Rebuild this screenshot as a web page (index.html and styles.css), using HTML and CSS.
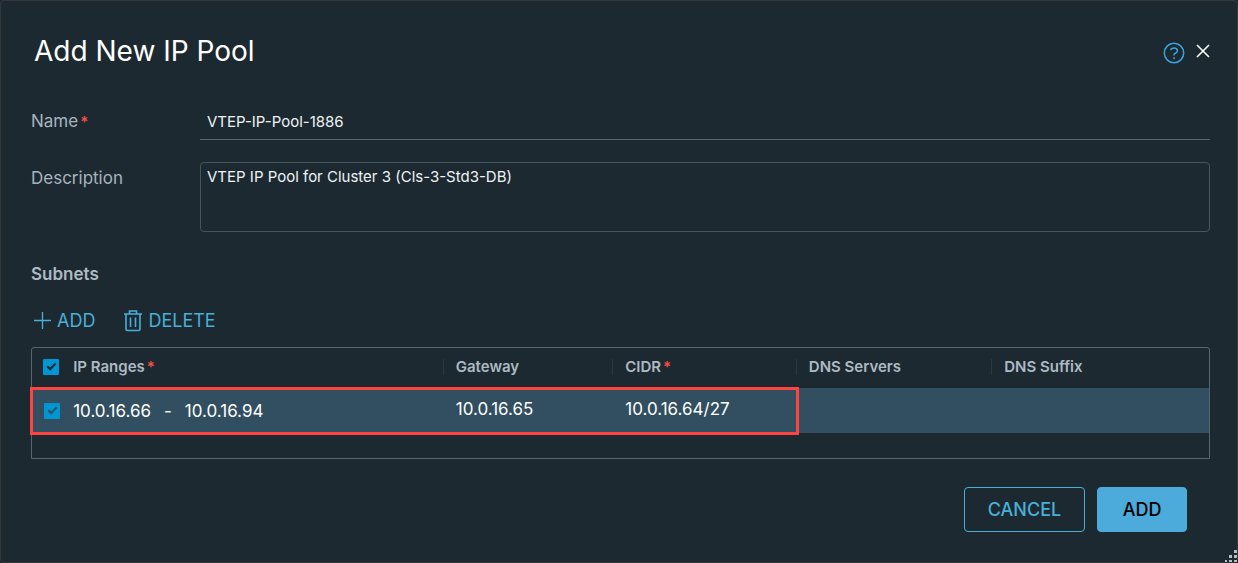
FILE: index.html
```html
<!DOCTYPE html>
<html lang="en">
<head>
<meta charset="utf-8">
<meta name="viewport" content="width=device-width, initial-scale=1">
<title>Add New IP Pool</title>
<link rel="stylesheet" href="styles.css">
</head>
<body>
<main class="dialog" role="dialog" aria-labelledby="dialog-title">
  <header class="dialog-header">
    <h1 class="dialog-title" id="dialog-title">Add New IP Pool</h1>
    <div class="header-actions">
      <button class="icon-button help-button" type="button" aria-label="Help">
        <svg class="help-icon" viewBox="0 0 22 22"><circle cx="11" cy="11" r="9.7"/><path d="M7.6 8.1C8 6.8 9.3 6 11 6c2 0 3.4 1.100 3.400 2.700 0 1.700-1.300 2.300-2.400 2.800-.7.300-1 .7-1 1.300v.6"/><circle class="dot" cx="11" cy="16.200" r="1"/></svg>
      </button>
      <button class="icon-button" type="button" aria-label="Close">
        <svg class="close-icon" viewBox="0 0 14 14"><path d="M1 1l12 12M13 1L1 13"/></svg>
      </button>
    </div>
  </header>

  <form class="dialog-form">
    <div class="field">
      <label class="field-label" for="name">Name<span class="required">*</span></label>
      <input class="text-input" id="name" type="text" value="VTEP-IP-Pool-1886">
    </div>
    <div class="field field-description">
      <label class="field-label" for="description">Description</label>
      <textarea class="text-area" id="description">VTEP IP Pool for Cluster 3 (Cls-3-Std3-DB)</textarea>
    </div>

    <h2 class="section-title">Subnets</h2>
    <div class="toolbar">
      <button class="tool-button" type="button">
        <svg class="plus-icon" viewBox="0 0 18 18"><path d="M8.500 0v17M0 8.500h17"/></svg>ADD
      </button>
      <button class="tool-button" type="button">
        <svg class="trash-icon" viewBox="0 0 20 22"><path d="M1 4h18M6.500 3.500V1h7v2.500M3 4.500V19q0 1.500 1.500 1.500h11q1.500 0 1.500-1.500V4.500M7.500 7.500v9.500M12.500 7.500v9.500"/></svg>DELETE
      </button>
    </div>

    <div class="grid">
      <table class="subnets">
        <colgroup><col class="col-check"><col class="col-ranges"><col class="col-gateway"><col class="col-cidr"><col class="col-servers"><col class="col-suffix"></colgroup>
        <thead>
          <tr>
            <th><input class="checkbox" type="checkbox" aria-label="Select all subnets" checked></th>
            <th>IP Ranges<span class="required">*</span></th>
            <th><span class="divided">Gateway</span></th>
            <th><span class="divided">CIDR<span class="required">*</span></span></th>
            <th><span class="divided">DNS Servers</span></th>
            <th><span class="divided">DNS Suffix</span></th>
          </tr>
        </thead>
        <tbody>
          <tr>
            <td><input class="checkbox checkbox-row" type="checkbox" aria-label="Select subnet 10.0.16.64/27" checked></td>
            <td><span class="range"><span>10.0.16.66</span><span>-</span><span>10.0.16.94</span></span></td>
            <td class="value">10.0.16.65</td>
            <td class="value">10.0.16.64/27</td>
            <td></td>
            <td></td>
          </tr>
        </tbody>
      </table>
      <div class="highlight"></div>
    </div>

    <footer class="dialog-footer">
      <button class="button button-outline" type="button">CANCEL</button>
      <button class="button button-primary" type="submit">ADD</button>
    </footer>
  </form>
  <svg class="resize-grip" viewBox="0 0 12 12"><path d="M9 0h3v3H9zM4 5h3v3H4zM9 5h3v3H9zM0 10h2v2H0zM4 10h3v2H4zM9 10h3v2H9z"/></svg>
</main>
</body>
</html>
```
FILE: styles.css
```css
*, *::before, *::after { box-sizing: border-box; }

body {
  margin: 0;
  background: #1c2930;
  color: #fff;
  font-family: Inter, "Liberation Sans", sans-serif;
  font-size: 15px;
}

button, input, textarea { font: inherit; }
button { cursor: pointer; }
svg { display: block; fill: none; stroke: currentColor; }

.dialog {
  position: relative;
  min-height: 100vh;
  padding: 30px 27px 30px 30px;
  border: 1px solid #35383a;
  border-radius: 4px;
  background: #1d2930;
}

.dialog-header {
  display: flex;
  justify-content: space-between;
  padding-left: 3px;
}

.dialog-title {
  margin: 0;
  font-size: 28px;
  font-weight: 400;
  line-height: 40px;
}

.header-actions { display: flex; align-items: center; gap: 11px; }
.icon-button { padding: 0; border: 0; background: none; color: #fff; }
.help-button { padding-top: 4px; }
.help-icon { width: 22px; height: 22px; color: #3aa3dc; stroke-width: 1.5; }
.help-icon .dot { fill: currentColor; stroke: none; }
.close-icon { width: 14px; height: 14px; stroke-width: 1.6; }

.dialog-form { padding-top: 32px; }

.field {
  display: grid;
  grid-template-columns: 169px 1fr;
  align-items: center;
}

.field-description { align-items: start; margin-top: 22px; }
.field-label { color: #a6b4bf; font-size: 17px; line-height: 32px; }
.required { margin-left: 2px; color: #f54f47; font-size: 15px; font-weight: 600; }

.text-input {
  height: 37px;
  padding: 0 7px;
  border: 0;
  border-bottom: 1px solid #56666f;
  outline: 0;
  background: transparent;
  color: #eef3f6;
}

.text-area {
  height: 70px;
  padding: 4px 6px;
  border: 1px solid #46565f;
  border-radius: 4px;
  outline: 0;
  resize: none;
  background: transparent;
  color: #eef3f6;
  line-height: 20px;
}

.section-title {
  margin: 30px 0 0;
  color: #acbac3;
  font-size: 17px;
  font-weight: 600;
  line-height: 24px;
}

.toolbar { display: flex; gap: 28px; padding: 22px 0 14px 3px; }

.tool-button {
  display: flex;
  align-items: center;
  gap: 5px;
  padding: 0;
  border: 0;
  background: none;
  color: #49afd9;
  font-size: 18px;
  line-height: 25px;
}

.plus-icon { width: 18px; height: 18px; stroke-width: 1.3; }
.trash-icon { width: 20px; height: 22px; stroke-width: 1.6; }

.grid {
  position: relative;
  height: 112px;
  border: 1px solid #56666f;
  border-radius: 3px 3px 0 0;
}

.subnets { width: 100%; table-layout: fixed; border-collapse: collapse; text-align: left; }
.col-check { width: 3.5%; }
.col-ranges { width: 31.4%; }
.col-gateway { width: 14.4%; }
.col-cidr { width: 15.6%; }
.col-servers { width: 16.6%; }

.subnets th { height: 40px; padding: 0 0 2px; color: #acbac3; font-weight: 600; line-height: 16px; }
.subnets td { height: 45px; padding: 0; background: #324f61; font-size: 17px; line-height: 20px; }
.subnets .value { padding: 0 0 4px 13px; }
.divided { display: block; padding-left: 12px; border-left: 1px solid #2d3940; }
.range { display: flex; gap: 13px; }

.checkbox {
  display: block;
  width: 16px;
  height: 16px;
  margin: 0 0 0 11px;
  appearance: none;
  border-radius: 1px;
  background: #0095d3;
  color: #10242e;
}

.checkbox-row { margin-left: 12px; color: #324f61; }

.checkbox:checked::before {
  content: "";
  display: block;
  width: 9px;
  height: 5px;
  margin: 4px;
  border: solid currentColor;
  border-width: 0 0 2px 2px;
  transform: rotate(-45deg);
}

.highlight {
  position: absolute;
  top: 39px;
  left: -2px;
  width: 65.3%;
  height: 48px;
  border: 3px solid #ff4340;
  pointer-events: none;
}

.dialog-footer {
  display: flex;
  justify-content: flex-end;
  gap: 12px;
  padding: 28px 23px 0 0;
}

.button {
  height: 45px;
  padding: 0 22px;
  border: 1px solid #49afd9;
  border-radius: 4px;
  font-size: 18px;
  font-weight: 500;
}

.button-outline { min-width: 121px; background: transparent; color: #49afd9; }
.button-primary { min-width: 90px; background: #4cabda; color: #000; }

.resize-grip {
  position: absolute;
  right: 0;
  bottom: 0;
  width: 12px;
  height: 12px;
  fill: #b8bdc0;
  stroke: none;
}
```
